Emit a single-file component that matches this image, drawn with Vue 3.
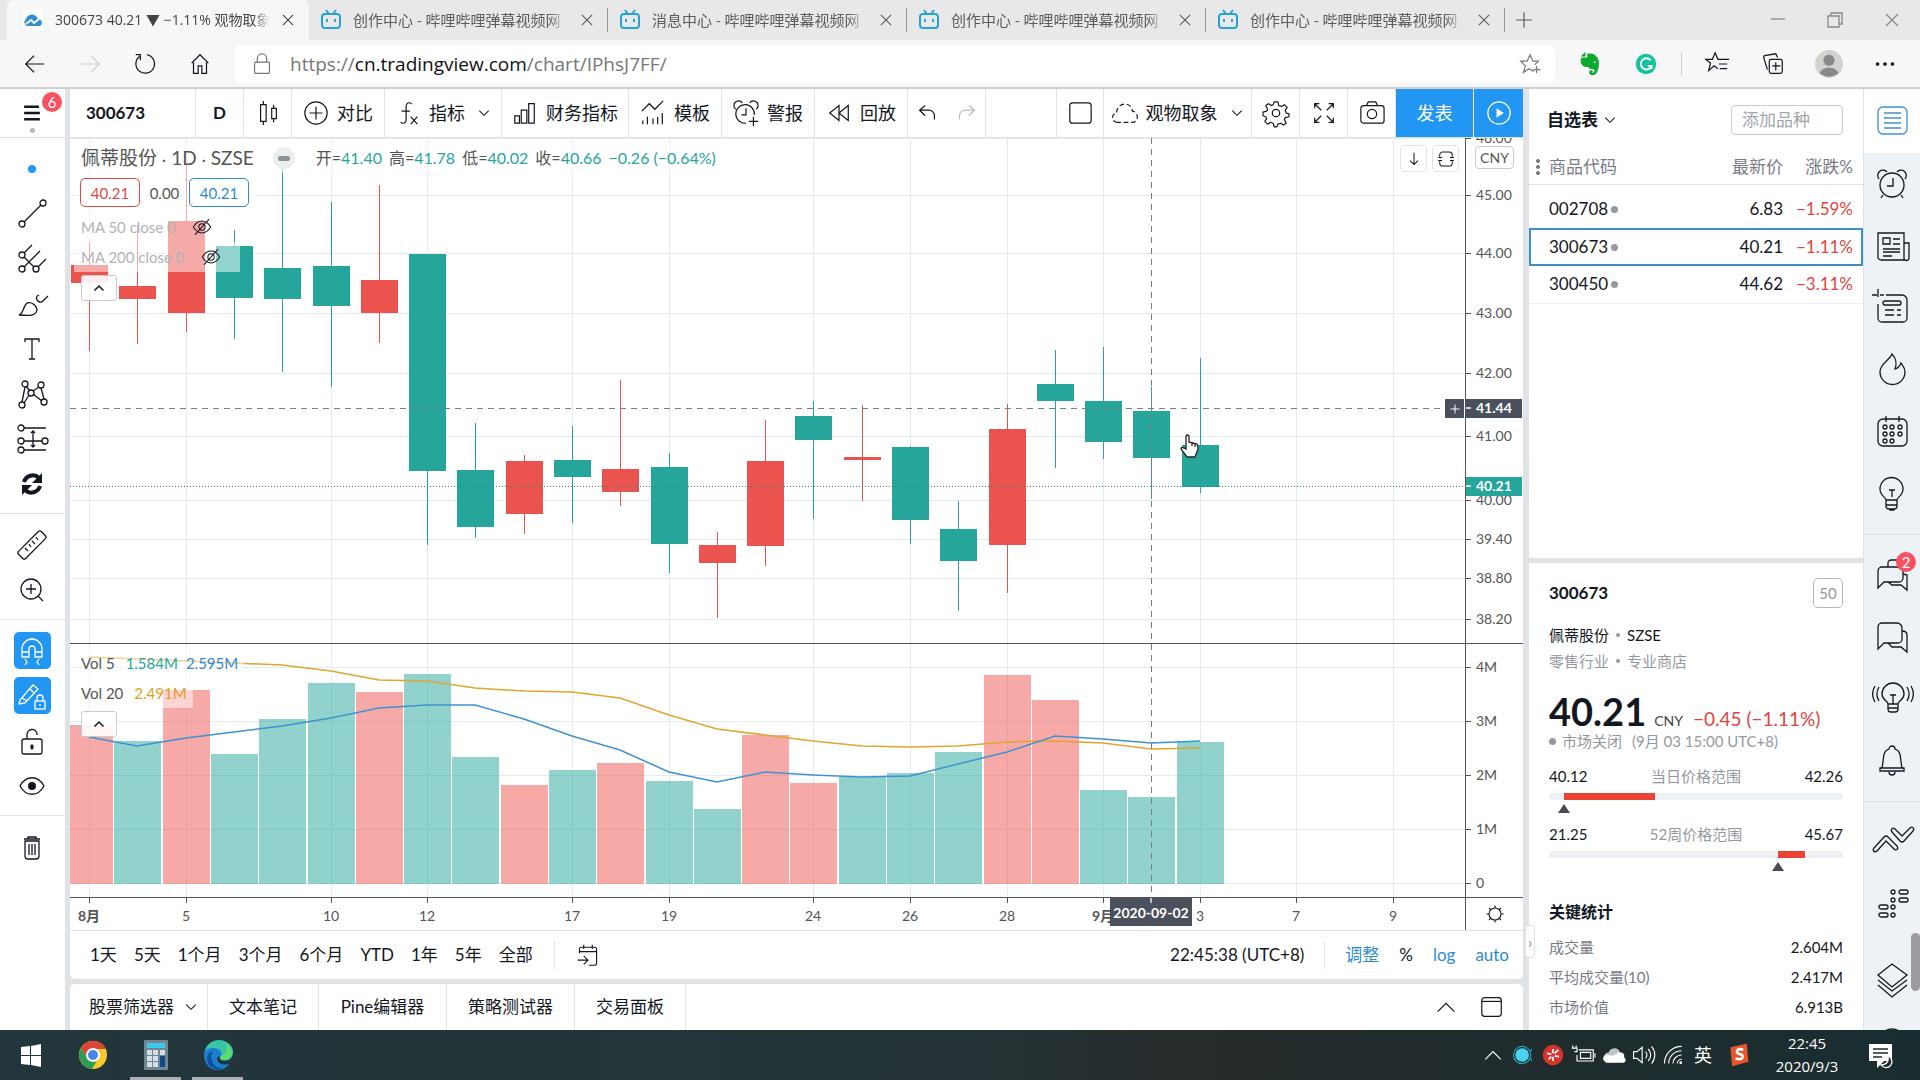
<script setup>
const icons = {
  back: '<path d="M24 14H5M13 5l-9 9 9 9"/>',
  forward: '<path d="M4 14h19M15 5l9 9-9 9"/>',
  reload: '<path d="M8 6a10 10 0 1 0 8-2M4 4h5v6"/>',
  home: '<path d="M5 13l9-9 9 9M7 12v12h5v-8h4v8h5V12"/>',
  lock: '<rect x="6" y="12" width="16" height="12" rx="1"/><path d="M9 12V8a5 5 0 0 1 10 0v4"/>',
  starPlus: '<path d="M18 22l-5-3-6 4 2-7-5-5h7l3-7 3 7h6l-4 4M21 16v8M17 20h8"/>',
  favs: '<path d="M15 19l-4-3-6 5 2-8-5-4h7l3-7 3 7h12M16 14h9M17 19h8"/>',
  collect: '<rect x="10" y="9" width="14" height="15" rx="2"/><path d="M17 12v9M13 16h9M8 20l-4-13a2 2 0 0 1 1-2l12-2 2 4"/>',
  more: '<g fill="currentColor" stroke="none"><circle cx="6" cy="14" r="2"/><circle cx="14" cy="14" r="2"/><circle cx="22" cy="14" r="2"/></g>',
  close: '<path d="M8 8l12 12M20 8L8 20"/>',
  plus: '<path d="M14 5v18M5 14h18"/>',
  min: '<path d="M7 13h14"/>',
  restore: '<path d="M7 10h11v11H7zM10 10V7h11v11h-3"/>',
  menu: '<path stroke-width="3" d="M4 6h19M4 14h20M4 22h20"/>',
  line: '<circle cx="4" cy="24" r="3"/><circle cx="25" cy="3" r="3"/><path d="M6 22L23 5"/>',
  fork: '<circle cx="4" cy="10" r="3"/><circle cx="4" cy="24" r="3"/><circle cx="18" cy="24" r="3"/><path d="M6 8l8-8M6 12l10 10M6 22L22 6M20 22l8-8"/>',
  brush: '<path d="M1 25c5-2 4-9 8-12a8 8 0 0 1 10 7c-1 6-8 6-18 5zM19 6c-2 4 3 8 6 5l5-5M19 6l2-1"/>',
  text: '<path d="M7 7V4h14v3M14 4v20M11 24h6"/>',
  pattern: '<circle cx="7" cy="4" r="3"/><circle cx="23" cy="5" r="3"/><circle cx="13" cy="13" r="3"/><circle cx="4" cy="25" r="3"/><circle cx="26" cy="22" r="3"/><path d="M7 7L4 22M23 8l3 11M8 6l4 5M21 7l-6 4M11 15l-5 8M15 14l9 7"/>',
  predict: '<circle cx="3" cy="3" r="3"/><circle cx="3" cy="16" r="3"/><circle cx="3" cy="25" r="3"/><circle cx="27" cy="16" r="3"/><path d="M6 3h22M6 16h18M6 25h22M15 7v14M13 8l2-2 2 2M13 20l2 2 2-2"/>',
  sync: '<path stroke-width="4" d="M6 12a9 9 0 0 1 15-4M22 16a9 9 0 0 1-15 4"/><path fill="currentColor" stroke="none" d="M24 3v10H14zM4 25V15h10z"/>',
  ruler: '<rect x="-2" y="9" width="32" height="10" rx="2" transform="rotate(-45 14 14)"/><path d="M7 17l3 3M11 13l2 3M14 10l3 3M18 6l2 3"/>',
  zoom: '<circle cx="13" cy="13" r="10"/><path d="M13 8v10M8 13h10M20 20l5 5"/>',
  magnet: '<path d="M4 20V12a10 10 0 0 1 20 0v8h-7v-8a3 3 0 0 0-6 0v8zM4 15h7M17 15h7M7 22l2 3-2 3M21 22l-2 3 2 3"/>',
  pencilLock: '<path d="M2 18L15 3l5 4L7 21l-6 1zM4 16l5 3M12 7l4 4"/><rect x="17" y="19" width="10" height="8"/><path d="M19 19v-3a3 3 0 0 1 6 0v3M22 22v2"/>',
  unlock: '<rect x="4" y="12" width="20" height="15" rx="2"/><path d="M9 12V8a5 5 0 0 1 10-1v1"/><ellipse cx="14" cy="20" rx="1" ry="2" fill="currentColor"/>',
  eye: '<path d="M2 14c6-11 18-11 24 0-6 11-18 11-24 0z"/><circle cx="14" cy="14" r="4" fill="currentColor" stroke="none"/>',
  eyeOff: '<path d="M3 14c6-10 16-10 22 0-6 10-16 10-22 0z"/><circle cx="14" cy="14" r="4"/><path d="M23 4L5 24"/>',
  trash: '<path d="M6 6h16M10 6V4h8v2M7 8h14v15a3 3 0 0 1-3 3h-8a3 3 0 0 1-3-3zM11 11v11M14 11v11M17 11v11"/>',
  candles: '<path d="M6 5h6v18H6zM9 1v4M9 23v4M18 9h5v11h-5zM20 5v4M20 20v4"/>',
  compare: '<circle cx="14" cy="14" r="12"/><path d="M14 7v14M7 14h14"/>',
  fx: '<path d="M18 4c-3-2-6-1-6 3v14c0 4-3 5-6 3M7 12h9M17 18l7 8M24 18l-7 8"/>',
  finance: '<path d="M3 17h5v8H3zM10 11h6v14h-6zM18 4h6v21h-6z"/>',
  template: '<path d="M2 12l8-8 6 6 9-9M3 22v4M8 18v8M14 20v6M19 18v8M24 14v12"/>',
  alarmPlus: '<path d="M14 25a10 10 0 1 1 9-9M14 9v7H9M3 10a5 5 0 1 1 7-7M18 3a5 5 0 1 1 7 7M22 18v10M17 23h10"/>',
  replay: '<path d="M14 6v16L4 14zM24 6v16l-10-8z"/>',
  undo: '<path d="M12 6L6 11l6 6M6 11h10a6 6 0 0 1 6 6v4"/>',
  redo: '<path d="M17 6l6 5-6 6M23 11H13a6 6 0 0 0-6 6v4"/>',
  square: '<rect x="3" y="3" width="23" height="22" rx="3"/>',
  cloud: '<path stroke-dasharray="5 3" d="M6 24a5 5 0 0 1-1-10C5 2 21 1 22 12c7 1 7 12 0 12z"/>',
  gear: '<circle cx="14" cy="14" r="4"/><path stroke-linejoin="round" d="M12 2h4l1 4 3 1 3-2 3 3-2 3 1 3 3 1v3l-4 1-1 2 2 4-3 2-3-2-3 1-1 3h-3l-1-4-3-1-3 2-3-3 2-3-1-2-3-1v-4l4-1 1-2-2-4 3-2 3 2 2-1z"/>',
  full: '<path d="M11 11L4 4M4 9V4h5M17 11l7-7M19 4h5v5M11 17l-7 7M4 19v5h5M17 17l7 7M24 19v5h-5"/>',
  camera: '<rect x="2" y="6" width="25" height="19" rx="3"/><path d="M8 6l2-4h8l2 4"/><circle cx="14" cy="15" r="5"/>',
  play: '<circle cx="14" cy="14" r="12"/><path fill="currentColor" d="M12 10l6 4-6 4z"/>',
  chev: '<path d="M8 11l6 6 6-6"/>',
  chevUp: '<path d="M5 19l9-9 9 9"/>',
  list: '<rect x="0" y="0" width="29" height="27" rx="5"/><path d="M6 6h17M6 11h17M6 16h17M6 21h17"/>',
  alarm: '<circle cx="14" cy="15" r="12"/><path d="M15 8v8H9M1 9a5 5 0 1 1 8-7M19 2a5 5 0 1 1 8 7M5 25l-2 3M23 25l2 3"/>',
  news: '<path d="M0 1h26v27H3a3 3 0 0 1-3-3zM26 11h5v15a2 2 0 0 1-5 0M5 6h7v6H5zM15 7h7M15 12h7M5 17h17M5 20h17M5 24h9"/>',
  data: '<path d="M8 1h16a5 5 0 0 1 5 5v18a4 4 0 0 1-4 4H4a4 4 0 0 1-4-4V10M0-5v8M-6 1h5M2 1h4M7 16h9M7 21h9M19 16h4M19 21h4"/><rect x="5" y="7" width="18" height="4" rx="2"/>',
  fire: '<path d="M14-2c-2 6-12 9-12 18a12 12 0 0 0 25 0c0-4-2-6-4-9-1 3-3 5-6 6 2-5 1-11-3-15z"/>',
  calendar: '<rect x="0" y="1" width="29" height="27" rx="5"/><path d="M8-2v6M21-2v6"/><circle cx="7" cy="9" r="2"/><circle cx="14" cy="9" r="2"/><circle cx="22" cy="9" r="2"/><circle cx="7" cy="16" r="2"/><circle cx="14" cy="16" r="2"/><circle cx="22" cy="16" r="2"/><circle cx="7" cy="23" r="2"/><circle cx="14" cy="23" r="2"/>',
  bulb: '<path d="M8 20c0-3-6-4-6-11a11 11 0 0 1 23 0c0 7-6 8-6 11v6a3 3 0 0 1-3 3h-5a3 3 0 0 1-3-3zM8 20h11M8 25h11M11 10h6M14 10v7M12 29v1h4v-1"/>',
  chats: '<path d="M4 6h17a4 4 0 0 1 4 4v7a4 4 0 0 1-4 4H6l-6 6V10a4 4 0 0 1 4-4zM10 6V2a3 3 0 0 1 3-3h7M25 13l4 1v15l-6-5H14l-4-3"/>',
  chat: '<path d="M4 0h15a5 5 0 0 1 5 5v11a4 4 0 0 1-4 4H6l-6 6V4a4 4 0 0 1 4-4zM24 8c4 0 5 2 5 4v17l-6-5H14l-4-4"/>',
  stream: '<path d="M10 19c0-3-6-4-6-10a11 11 0 0 1 22 0c0 6-6 7-6 10v5a3 3 0 0 1-3 3h-4a3 3 0 0 1-3-3zM10 19h10M10 23h10M12 10h6M15 10v9M1 2c-3 5-3 9 0 14M-3 1c-3 5-3 11 0 16M29 2c3 5 3 9 0 14M33 1c3 5 3 11 0 16"/>',
  bell: '<path d="M4 21c2-8 0-17 7-19a3 3 0 0 1 6 0c7 2 5 11 7 19M2 21h24v3H2zM11 25a3 3 0 0 0 6 0"/>',
  zig: '<path stroke-linejoin="round" d="M-4 20L6 9q2-2 4 0l9 9c2 3-1 5-3 3l-8-8-9 10c-3 2-5-1-3-3zM14 4c-2-3 1-5 3-3l7 7 8-8c2-2 5 0 3 3l-9 10q-2 2-4 0z"/>',
  dots: '<g><circle cx="15" cy="2" r="2"/><circle cx="15" cy="10" r="2"/><circle cx="15" cy="17" r="2"/><circle cx="15" cy="25" r="2"/><rect x="21" y="0" width="9" height="4" rx="2"/><rect x="21" y="8" width="9" height="4" rx="2"/><rect x="1" y="15" width="9" height="4" rx="2"/><rect x="1" y="23" width="9" height="4" rx="2"/></g>',
  layers: '<path d="M14-2l15 11-15 12L0 9zM0 14l14 11 15-11M0 19l14 12 15-12"/>',
  help: '<circle cx="14" cy="14" r="13"/><path d="M10 11a4 4 0 1 1 5 4l-1 3M14 21v1"/>',
  goto: '<path d="M4 12V7a2 2 0 0 1 2-2h16a2 2 0 0 1 2 2v17a2 2 0 0 1-2 2h-7M4 10h20M9 2v5M19 2v5M2 20h11M9 15l5 5-5 5"/>',
  window: '<rect x="3" y="4" width="21" height="20" rx="3"/><path d="M3 8h21"/>',
  sun: '<circle cx="14" cy="14" r="7"/><path d="M14 4v3M14 21v3M4 14h3M21 14h3M7 7l2 2M19 19l2 2M21 7l-2 2M9 19l-2 2"/>',
  down: '<path d="M14 6v15M9 16l5 5 5-5"/>',
  expand: '<path d="M6 11V9a4 4 0 0 1 4-4h8a4 4 0 0 1 4 4v2M6 17v2a4 4 0 0 0 4 4h8a4 4 0 0 0 4-4v-2M4 12h5M19 12h5M4 16h5M19 16h5"/>',
  battery: '<path d="M9 8h17v13H7v-7M11 11h12v7H11zM1 6h6v4H4M2 3v3M6 3v3M28 12v5"/>',
  onedrive: '<path fill="#bcc5c5" stroke="none" d="M9 11a7 7 0 0 1 13-1l-6 8-10 4a6 6 0 0 1 3-11z"/><path fill="#fff" stroke="none" d="M5 22c-4-2-3-8 2-8l7 1 6-4c6-1 8 3 7 6 3 2 2 6-1 6H6z"/>',
  speaker: '<path d="M3 10h4l6-5v18l-6-5H3zM17 10c2 2 2 6 0 8M20 7c4 4 4 10 0 14M24 4c5 6 5 14 0 20"/>',
  wifi: '<path d="M4 24A20 20 0 0 1 24 4M9 24A15 15 0 0 1 24 9M14 24a10 10 0 0 1 10-10M19 24a5 5 0 0 1 5-5"/><circle cx="23" cy="23" r="1"/>',
  note: '<path fill="#fff" stroke="none" d="M3 3h23v17H18l-7 7v-7H3z"/><path stroke="#1f2d30" d="M7 8h15M7 12h15M7 16h9"/><path fill="#1f2d30" d="M22 15a6 6 0 1 1-7 9c5 0 8-3 7-9z"/>',
}

const tabs = ['创作中心', '消息中心', '创作中心', '创作中心'].map(t => t + ' - 哔哩哔哩弹幕视频网')

const tools = [
  ['line', 'fork', 'brush', 'text', 'pattern', 'predict', 'sync'],
  ['ruler', 'zoom'],
  ['magnet', 'pencilLock', 'unlock', 'eye'],
  ['trash'],
]
const panels = [
  ['list', 'alarm', 'news', 'data', 'fire', 'calendar', 'bulb'],
  ['chats', 'chat', 'stream', 'bell'],
  ['zig', 'dots'],
  ['layers', 'help'],
]
const header = [
  { icon: 'candles', w: 'w48' },
  { icon: 'compare', label: '对比', w: 'w93' },
  { icon: 'fx', label: '指标', more: true, w: 'w117' },
  { icon: 'finance', label: '财务指标', w: 'w127' },
  { icon: 'template', label: '模板', w: 'w93' },
  { icon: 'alarmPlus', label: '警报', w: 'w93' },
  { icon: 'replay', label: '回放', w: 'w93' },
]

// y positions share one vertical scale that starts at the top of the window's chart area
const TOP = 138
const cx = i => Math.round(19.2 + i * 48.28)
// high, body top, body bottom, low, rising candle, volume top, rising volume
const bars = [
  [242, 265, 283, 351, 1, 725, 1], [225, 286, 299, 344, 1, 741, 0], [163, 221, 313, 332, 1, 690, 1],
  [230, 246, 298, 339, 0, 754, 0], [163, 268, 299, 372, 0, 719, 0], [202, 266, 306, 387, 0, 683, 0],
  [185, 280, 313, 343, 1, 692, 1], [254, 254, 471, 545, 0, 674, 0], [423, 470, 527, 538, 0, 757, 0],
  [455, 461, 514, 534, 1, 785, 1], [426, 460, 477, 523, 0, 770, 0], [380, 469, 492, 506, 1, 763, 1],
  [453, 467, 544, 573, 0, 781, 0], [532, 545, 563, 618, 1, 809, 0], [420, 461, 546, 566, 1, 735, 1],
  [401, 416, 440, 519, 0, 783, 1], [405, 457, 460, 501, 1, 777, 0], [446, 447, 520, 544, 0, 773, 0],
  [501, 529, 561, 611, 0, 752, 0], [404, 429, 545, 593, 1, 675, 1], [350, 384, 401, 468, 0, 700, 1],
  [347, 401, 442, 459, 0, 790, 0], [387, 411, 458, 499, 0, 797, 0], [358, 445, 487, 493, 0, 742, 0],
]
const slow = [657, 659, 661, 663, 665, 671, 680, 681, 688, 691, 692, 698, 715, 729, 735, 741, 746, 747, 746, 742, 741, 743, 749, 748]
const fast = [737, 746, 738, 732, 726, 718, 708, 705, 705, 719, 736, 750, 772, 782, 772, 775, 777, 776, 764, 752, 736, 739, 743, 741]
const poly = a => a.map((y, i) => cx(i) + ',' + y).join(' ')
const prices = [[138, '46.00'], [195, '45.00'], [253, '44.00'], [313, '43.00'], [373, '42.00'], [436, '41.00'], [500, '40.00'], [539, '39.40'], [578, '38.80'], [619, '38.20'],
  [667, '4M'], [721, '3M'], [775, '2M'], [829, '1M'], [883, '0']]
const days = [[0, '8月'], [2, '5'], [5, '10'], [7, '12'], [10, '17'], [12, '19'], [15, '24'], [17, '26'], [19, '28'], [21, '9月'], [23, '3'], [25, '7'], [27, '9']]
const watch = [['002708', '6.83', '−1.59%'], ['300673', '40.21', '−1.11%'], ['300450', '44.62', '−3.11%']]
const ranges = ['1天', '5天', '1个月', '3个月', '6个月', 'YTD', '1年', '5年', '全部']
const docks = [['股票筛选器', 'd138'], ['文本笔记', 'd111'], ['Pine编辑器', 'd127'], ['策略测试器', 'd127'], ['交易面板', 'd111']]
const stats = [['成交量', '2.604M'], ['平均成交量(10)', '2.417M'], ['市场价值', '6.913B']]
const spans = [
  { lo: '40.12', name: '当日价格范围', hi: '42.26', from: 5, size: 31 },
  { lo: '21.25', name: '52周价格范围', hi: '45.67', from: 78, size: 9 },
]
</script>

<template>
  <div class="desktop">
    <header class="browser">
      <div class="tabs">
        <div class="tab active">
          <svg class="fav" viewBox="0 0 20 20"><rect width="20" height="20" fill="#fff" stroke="none"/><path fill="#2f8fd6" stroke="none" d="M4 16a4 4 0 0 1-1-7c2-6 10-6 12 0 5 0 5 7 1 7z"/><path d="M3 14l5-4 3 3 5-4" stroke="#fff"/></svg>
          <span class="title">300673 40.21 ▼ −1.11% 观物取象</span>
          <button class="x" aria-label="关闭"><svg viewBox="0 0 28 28" v-html="icons.close"/></button>
        </div>
        <div v-for="(t, i) in tabs" :key="i" class="tab">
          <svg class="fav" viewBox="0 0 20 20"><rect x="1" y="4" width="18" height="14" rx="3"/><path d="M5 0l3 4M15 0l-3 4M6 9v3M14 9v3"/></svg>
          <span class="title">{{ t }}</span>
          <button class="x" aria-label="关闭"><svg viewBox="0 0 28 28" v-html="icons.close"/></button>
        </div>
        <button class="newtab" aria-label="新标签页"><svg viewBox="0 0 28 28" v-html="icons.plus"/></button>
        <div class="winctl">
          <button v-for="n in ['min', 'restore', 'close']" :key="n" :aria-label="n"><svg viewBox="0 0 28 28" v-html="icons[n]"/></button>
        </div>
      </div>
      <div class="nav">
        <div class="navbtns">
          <button v-for="n in ['back', 'forward', 'reload', 'home']" :key="n" :class="n" :aria-label="n"><svg viewBox="0 0 28 28" v-html="icons[n]"/></button>
        </div>
        <div class="address">
          <svg viewBox="0 0 28 28" v-html="icons.lock"/>
          <span class="url" role="textbox">https://<b>cn.tradingview.com</b>/chart/IPhsJ7FF/</span>
          <svg viewBox="0 0 28 28" v-html="icons.starPlus"/>
        </div>
        <div class="exts">
          <button aria-label="印象笔记"><svg viewBox="0 0 28 28"><path fill="#0ca82f" stroke="none" d="M11 3c4-1 8 0 10 3 4 4 3 13 0 18-2 3-8 3-8-1 0-3 4-3 4-1l-1 1c1 1 3 0 3-2-1-3-6 0-7-4-4 1-8-1-8-7 0-2 1-3 2-3h5z"/><path fill="#0ca82f" stroke="none" d="M4 6l5-5v5z"/><circle cx="19" cy="12" r="1" fill="#fff" stroke="none"/></svg></button>
          <button aria-label="Grammarly"><svg viewBox="0 0 28 28"><circle cx="14" cy="14" r="11" fill="#15c39a" stroke="none"/><path d="M19 10a6 6 0 1 0 1 6h-4M20 15v4" stroke="#fff" stroke-width="2"/></svg></button>
          <i></i>
          <button aria-label="收藏夹"><svg viewBox="0 0 28 28" v-html="icons.favs"/></button>
          <button aria-label="集锦"><svg viewBox="0 0 28 28" v-html="icons.collect"/></button>
          <button aria-label="用户"><svg viewBox="0 0 28 28"><g stroke="none"><circle cx="14" cy="14" r="15" fill="#d4d2cf"/><circle cx="14" cy="10" r="6" fill="#8a8886"/><path fill="#8a8886" d="M4 24c2-8 18-8 20 0-6 5-14 5-20 0z"/></g></svg></button>
          <button aria-label="更多"><svg viewBox="0 0 28 28" v-html="icons.more"/></button>
        </div>
      </div>
    </header>

    <main class="app">
      <nav class="tools">
        <button class="menu" aria-label="菜单"><svg viewBox="0 0 28 28" v-html="icons.menu"/><em class="badge">6</em><i></i></button>
        <div v-for="(g, gi) in tools" :key="gi" class="group">
          <button v-if="gi === 0" aria-label="光标"><span class="dot"></span></button>
          <button v-for="n in g" :key="n" :class="{ on: n === 'magnet' || n === 'pencilLock' }" :aria-label="n"><span><svg viewBox="0 0 28 28" v-html="icons[n]"/></span></button>
        </div>
      </nav>

      <section class="center">
        <div class="card">
          <div class="bar">
            <button class="symbol">300673</button>
            <button class="w48 strong">D</button>
            <button v-for="b in header" :key="b.icon" :class="b.w">
              <svg viewBox="0 0 28 28" v-html="icons[b.icon]"/><span v-if="b.label">{{ b.label }}</span><svg v-if="b.more" class="small" viewBox="0 0 28 28" v-html="icons.chev"/>
            </button>
            <div class="history">
              <button aria-label="撤销"><svg viewBox="0 0 28 28" v-html="icons.undo"/></button>
              <button class="off" aria-label="重做"><svg viewBox="0 0 28 28" v-html="icons.redo"/></button>
            </div>
            <span class="fill"></span>
            <button class="w48" aria-label="布局"><svg viewBox="0 0 28 28" v-html="icons.square"/></button>
            <button class="w147"><svg viewBox="0 0 28 28" v-html="icons.cloud"/><span>观物取象</span><svg class="small" viewBox="0 0 28 28" v-html="icons.chev"/></button>
            <button v-for="n in ['gear', 'full', 'camera']" :key="n" class="w48" :aria-label="n"><svg viewBox="0 0 28 28" v-html="icons[n]"/></button>
            <button class="publish">发表</button>
            <button class="publish play" aria-label="播放"><svg viewBox="0 0 28 28" v-html="icons.play"/></button>
          </div>

          <div class="chart">
            <div class="plotrow">
              <div class="plot">
                <svg class="canvas" width="100%" height="759">
                  <g :transform="`translate(0 ${-TOP})`" shape-rendering="crispEdges">
                    <g class="grid">
                      <line v-for="p in prices" :key="p[1]" x1="0" x2="100%" :y1="p[0]" :y2="p[0]"/>
                      <line v-for="d in days" :key="d[0]" :x1="cx(d[0])" :x2="cx(d[0])" y1="138" y2="897"/>
                    </g>
                    <rect v-for="(b, i) in bars" :key="i" :x="cx(i) - 23" :y="b[5]" width="47" :height="884 - b[5]" :class="b[6] ? 'vup' : 'vdown'"/>
                    <g v-for="(b, i) in bars" :key="'c' + i" :class="b[4] ? 'up' : 'down'">
                      <rect :x="cx(i)" :y="b[0]" width="1" :height="b[3] - b[0]"/>
                      <rect :x="cx(i) - 18" :y="b[1]" width="37" :height="b[2] - b[1]"/>
                    </g>
                    <g shape-rendering="auto" fill="none" stroke-width="1.5">
                      <polyline :points="poly(slow)" stroke="#e0a52f"/>
                      <polyline :points="poly(fast)" stroke="#3f92d2"/>
                    </g>
                    <line class="last" x1="0" x2="100%" y1="486" y2="486"/>
                    <line class="cross" x1="0" x2="100%" y1="408" y2="408"/>
                    <line class="cross" :x1="cx(22)" :x2="cx(22)" y1="138" y2="897"/>
                    <line class="edge" x1="0" x2="100%" y1="643" y2="643"/>
                  </g>
                  <path transform="translate(1110 296)" fill="#fff" stroke="#222" d="M6 12V2q1-2 3 0v6l8 2q1 1 1 5l-3 8H7L1 15q0-3 5 0zM12 9v3M15 10v3"/>
                </svg>

                <div class="legend">
                  <div class="row head">
                    <span class="name">佩蒂股份<small>·</small>1D<small>·</small>SZSE</span>
                    <button class="pill" aria-label="收起"><i></i></button>
                    <span class="ohlc"><span>开=<b>41.40</b></span><span>高=<b>41.78</b></span><span>低=<b>40.02</b></span><span>收=<b>40.66</b></span><b>−0.26 (−0.64%)</b></span>
                  </div>
                  <div class="row quote"><button class="sell">40.21</button><span>0.00</span><button class="buy">40.21</button></div>
                  <div class="row ma">MA 50 close 0<svg viewBox="0 0 28 28" v-html="icons.eyeOff"/></div>
                  <div class="row ma">MA 200 close 0<svg viewBox="0 0 28 28" v-html="icons.eyeOff"/></div>
                  <button class="fold" aria-label="折叠"><svg viewBox="0 0 28 28" v-html="icons.chevUp"/></button>
                </div>
                <div class="legend vol">
                  <div class="row">Vol 5<b class="g">1.584M</b><b class="b">2.595M</b></div>
                  <div class="row">Vol 20<b class="y">2.491M</b></div>
                  <button class="fold" aria-label="折叠"><svg viewBox="0 0 28 28" v-html="icons.chevUp"/></button>
                </div>
                <div class="corner">
                  <button aria-label="滚动"><svg viewBox="0 0 28 28" v-html="icons.down"/></button>
                  <button aria-label="最大化"><svg viewBox="0 0 28 28" v-html="icons.expand"/></button>
                </div>
                <button class="addline" aria-label="添加"><svg viewBox="0 0 28 28" v-html="icons.plus"/></button>
              </div>
              <div class="scale">
                <svg width="57" height="759">
                  <g :transform="`translate(0 ${-TOP})`">
                    <g class="edge" shape-rendering="crispEdges">
                      <line x1="0" x2="57" y1="643" y2="643"/>
                      <line v-for="p in prices" :key="p[1]" x1="0" x2="5" :y1="p[0]" :y2="p[0]"/>
                    </g>
                    <text v-for="p in prices" :key="p[1]" x="10" :y="p[0] + 5">{{ p[1] }}</text>
                    <rect y="399" width="56" height="19" fill="#4a505c"/>
                    <rect y="477" width="56" height="19" fill="#26a69a"/>
                    <path d="M0 408h5M0 486h5" stroke="#fff"/>
                    <text class="tag" x="10" y="413">41.44</text>
                    <text class="tag" x="10" y="491">40.21</text>
                  </g>
                </svg>
                <span class="cny">CNY</span>
              </div>
            </div>
            <div class="timerow">
              <svg class="times" width="100%" height="32">
                <g class="edge" shape-rendering="crispEdges"><line v-for="d in days" :key="d[0]" :x1="cx(d[0])" :x2="cx(d[0])" y1="0" y2="5"/></g>
                <text v-for="d in days" :key="d[0]" :x="cx(d[0])" y="23" text-anchor="middle" :class="{ month: d[1].endsWith('月') }">{{ d[1] }}</text>
                <g :transform="`translate(${cx(22)} 0)`"><rect x="-41" width="82" height="28" fill="#4a505c"/><path d="M0 0v5" stroke="#fff"/><text class="tag" y="20" text-anchor="middle">2020-09-02</text></g>
              </svg>
              <button class="axisset" aria-label="设置"><svg viewBox="0 0 28 28" v-html="icons.sun"/></button>
            </div>
          </div>

          <div class="ranges">
            <button v-for="r in ranges" :key="r">{{ r }}</button>
            <i></i>
            <button aria-label="前往"><svg viewBox="0 0 28 28" v-html="icons.goto"/></button>
            <div class="modes">
              <button>22:45:38 (UTC+8)</button>
              <i></i>
              <button class="hot">调整</button><button>%</button><button class="hot">log</button><button class="hot">auto</button>
            </div>
          </div>
        </div>

        <div class="dock">
          <button v-for="d in docks" :key="d[0]" :class="d[1]">{{ d[0] }}<svg v-if="d[1] === 'd138'" viewBox="0 0 28 28" v-html="icons.chev"/></button>
          <span class="fill"></span>
          <button class="ctl" aria-label="展开"><svg viewBox="0 0 28 28" v-html="icons.chevUp"/></button>
          <button class="ctl" aria-label="窗口"><svg viewBox="0 0 28 28" v-html="icons.window"/></button>
        </div>
      </section>

      <aside class="side">
        <button class="handle" aria-label="收起面板">›</button>
        <section class="watch">
          <div class="whead">
            <button>自选表<svg viewBox="0 0 28 28" v-html="icons.chev"/></button>
            <input type="text" placeholder="添加品种" aria-label="添加品种">
          </div>
          <table>
            <thead><tr><th><span class="grip"></span>商品代码</th><th>最新价</th><th>涨跌%</th></tr></thead>
            <tbody>
              <tr v-for="w in watch" :key="w[0]" :class="{ sel: w[0] === '300673' }"><td>{{ w[0] }}<i></i></td><td>{{ w[1] }}</td><td>{{ w[2] }}</td></tr>
            </tbody>
          </table>
        </section>
        <section class="detail">
          <div class="dhead"><h2>300673</h2><button>50</button></div>
          <p class="firm">佩蒂股份<i></i>SZSE</p>
          <p class="firm soft">零售行业<i></i>专业商店</p>
          <p class="price"><strong>40.21</strong><small>CNY</small><span>−0.45 (−1.11%)</span></p>
          <p class="state"><i></i>市场关闭<span>(9月 03 15:00 UTC+8)</span></p>
          <div v-for="s in spans" :key="s.lo" class="span">
            <div><b>{{ s.lo }}</b><span>{{ s.name }}</span><b>{{ s.hi }}</b></div>
            <div class="track"><i class="seg" :style="{ left: s.from + '%', width: s.size + '%' }"></i><i class="tri" :style="{ left: s.from + '%' }"></i></div>
          </div>
          <h3>关键统计</h3>
          <dl><div v-for="s in stats" :key="s[0]"><dt>{{ s[0] }}</dt><dd>{{ s[1] }}</dd></div></dl>
        </section>
      </aside>

      <nav class="rail">
        <div v-for="(g, gi) in panels" :key="gi" class="group">
          <button v-for="n in g" :key="n" :class="{ on: n === 'list' }" :aria-label="n"><svg viewBox="0 0 28 28" v-html="icons[n]"/><em v-if="n === 'chats'" class="badge">2</em></button>
        </div>
        <i class="thumb"></i>
      </nav>
    </main>

    <footer class="taskbar">
      <button aria-label="开始"><svg viewBox="0 0 28 28"><path fill="#fff" stroke="none" d="M4 6l9-1v9H4zM14 5l10-2v11H14zM4 15h9v9l-9-1zM14 15h10v11l-10-2z"/></svg></button>
      <button aria-label="Chrome"><svg viewBox="0 0 28 28"><g stroke="none"><circle cx="14" cy="14" r="14" fill="#f7c92b"/><path fill="#d9483b" d="M2 7a14 14 0 0 1 25 1H14l-6 9z"/><path fill="#2c9c54" d="M2 7a14 14 0 0 0 11 21l6-10-6 2-5-3z"/><circle cx="14" cy="14" r="7" fill="#fff"/><circle cx="14" cy="14" r="5" fill="#4787ea"/></g></svg></button>
      <button class="run" aria-label="计算器"><svg viewBox="0 0 28 28"><g stroke="none"><rect x="2" y="-1" width="24" height="30" rx="1" fill="#6f8693"/><rect x="5" y="2" width="18" height="5" fill="#3fc8ef"/><path fill="#d7dfe6" d="M5 9h5v5H5zM11 9h5v5h-5zM18 9h5v5h-5zM5 15h5v5H5zM11 15h5v5h-5zM5 21h5v5H5zM11 21h5v5h-5z"/><path fill="#114a86" d="M18 15h5v11h-5z"/></g></svg></button>
      <button class="run" aria-label="Edge"><svg viewBox="0 0 28 28"><g stroke="none"><path fill="#1b7fd0" d="M0 14C0 5 7 0 14 0c9 0 15 6 15 12 0 5-4 8-8 8-5 0-6-3-5-5-6 1-3 11 9 8-3 5-8 6-11 6C6 29 0 23 0 14z"/><path fill="#36c6a7" d="M1 10C3 3 8-1 15-1c8 0 14 6 14 12 0 5-4 8-8 8-5 0-6-2-4-4 2-4-2-8-8-8-4 0-7 2-8 3z"/><path fill="#5fdc6c" d="M22 2c9 7 7 17-1 17-5 0-6-2-4-4 6-2 8-7 5-13z"/><path fill="#0d4f9c" d="M7 14c0 8 5 14 12 13-4 3-12 1-15-5-2-6 0-10 5-12z"/></g></svg></button>
      <span class="fill"></span>
      <div class="tray">
        <svg viewBox="0 0 28 28" v-html="icons.chevUp"/>
        <svg viewBox="0 0 28 28"><circle cx="13" cy="14" r="8" fill="#49d3ee" stroke="none"/><circle cx="13" cy="14" r="10" stroke="#2ba9c6"/><path d="M24 7l-1 3M24 21l-1-3" stroke="#2ba9c6"/></svg>
        <svg viewBox="0 0 28 28"><circle cx="14" cy="14" r="12" fill="#d8342e" stroke="none"/><path d="M14 7v5M14 16v5M7 12l5 1M16 15l5 1M9 19l3-3M16 12l4-4" stroke="#fff" stroke-width="2"/></svg>
        <svg viewBox="0 0 28 28" v-html="icons.battery"/>
        <svg viewBox="0 0 28 28" v-html="icons.onedrive"/>
        <svg viewBox="0 0 28 28" v-html="icons.speaker"/>
        <svg viewBox="0 0 28 28" v-html="icons.wifi"/>
        <span>英</span>
        <svg class="sogou" viewBox="0 0 28 28"><path fill="#e8552c" stroke="none" d="M4 5l19-4 2 21-19 5z"/><path d="M19 8c-8-3-10 4-4 5s4 8-5 5" stroke="#fff" stroke-width="3"/></svg>
      </div>
      <div class="clock"><span>22:45</span><span>2020/9/3</span></div>
      <button class="notif" aria-label="通知"><svg viewBox="0 0 28 28" v-html="icons.note"/></button>
    </footer>
  </div>
</template>

<style>
body { margin: 0; background: #fff; }
</style>

<style scoped>
* { box-sizing: border-box; }
.desktop { display: flex; flex-direction: column; height: 100vh; overflow: hidden; font: 15px/20px Lato, "Noto Sans CJK SC", sans-serif; color: #131722; }
button { font: inherit; color: inherit; background: none; border: 0; padding: 0; margin: 0; display: flex; align-items: center; justify-content: center; white-space: nowrap; }
svg { display: block; flex: none; overflow: visible; fill: none; stroke: currentColor; stroke-width: 1.3; }
svg text { stroke: none; }
.fill { flex: 1; }
p, h2, h3, dl, dd { margin: 0; }
.badge { position: absolute; width: 20px; height: 20px; border-radius: 50%; background: #f7525f; color: #fff; font-style: normal; font-size: 15px; line-height: 20px; text-align: center; }

/* browser */
.browser { flex: none; font-family: "Open Sans", "Noto Sans CJK SC", sans-serif; background: #f7f7f7; border-bottom: 2px solid #cfcfcf; }
.tabs { display: flex; height: 40px; background: #e8e8e8; }
.tab { display: flex; align-items: center; width: 299px; padding: 0 11px 0 12px; color: #5c5c5c; position: relative; }
.tab::after { content: ""; position: absolute; right: 0; top: 8px; height: 24px; width: 1px; background: #999; }
.tab.active { width: 302px; margin-left: 7px; padding-left: 16px; background: #f7f7f7; border-radius: 6px 6px 0 0; color: #444; }
.tab.active::after { display: none; }
.fav { width: 20px; height: 20px; color: #25a4d4; stroke-width: 2; }
.title { flex: 1; margin-left: 12px; overflow: hidden; white-space: nowrap; font-size: 15px; mask-image: linear-gradient(90deg, #000 92%, transparent); }
.active .title { font-size: 14px; }
.x { width: 20px; height: 28px; margin-left: 11px; }
.active .x { margin-left: 8px; }
.x svg { width: 24px; height: 24px; }
.newtab { width: 38px; }
.newtab svg { width: 24px; height: 24px; color: #555; }
.winctl { margin-left: auto; display: flex; }
.winctl button { width: 57px; color: #888; }
.winctl svg { width: 28px; height: 28px; }
.nav { display: flex; align-items: center; height: 47px; padding-left: 7px; }
.navbtns { display: flex; width: 228px; }
.navbtns button { width: 55px; }
.navbtns svg, .address svg, .exts svg { width: 26px; height: 26px; }
.forward { color: #ccc; }
.address { flex: 1; display: flex; align-items: center; height: 38px; padding: 0 12px 0 14px; background: #fff; border-radius: 5px; color: #777; }
.url { flex: 1; margin-left: 15px; font-size: 19px; line-height: 24px; }
.url b { font-weight: 400; color: #111; }
.exts { display: flex; align-items: center; padding: 0 7px; }
.exts button { width: 56px; }
.exts i { width: 1px; height: 24px; background: #ccc; margin: 0 7px; }

/* workspace */
.app { flex: 1; min-height: 0; display: flex; background: #dfe2e6; }
.tools { width: 65px; flex: none; background: #fff; margin-right: 5px; }
.tools .menu { position: relative; width: 100%; height: 49px; border-bottom: 1px solid #dfe2e6; }
.menu svg { width: 26px; height: 22px; }
.menu .badge { left: 42px; top: 3px; }
.menu i { position: absolute; left: 30px; top: 39px; width: 5px; height: 5px; border-radius: 50%; background: #b2b5be; }
.tools .group { padding: 8px 0 7px; border-bottom: 1px solid #dfe2e6; }
.tools .group:last-child { border: 0; }
.tools button { padding-right: 1px; }
.tools .group button { width: 100%; height: 45px; }
.tools .group span { display: flex; align-items: center; justify-content: center; width: 37px; height: 37px; border-radius: 5px; }
.tools .group svg { width: 28px; height: 28px; }
.tools .group .dot { width: 8px; height: 8px; border-radius: 50%; background: #2196f3; }
.on span { background: #2196f3; color: #fff; }

.center { flex: 1; min-width: 0; display: flex; flex-direction: column; gap: 5px; }
.card { background: #fff; border-radius: 0 0 5px 5px; overflow: hidden; }
.bar { display: flex; height: 49px; border-bottom: 1px solid #dfe2e6; font-size: 18px; }
.bar > button, .history { border-right: 1px solid #dfe2e6; gap: 8px; }
.bar svg { width: 26px; height: 26px; }
.bar .small { width: 22px; height: 22px; margin: 0 -4px 0 0; }
.symbol { width: 126px; padding-right: 34px; font-weight: 700; font-size: 17px; }
.strong { font-weight: 700; font-size: 17px; }
.w48 { width: 48px; }
.w93 { width: 93px; }
.w117 { width: 117px; }
.w127 { width: 127px; }
.w147 { width: 148px; }
.history { display: flex; width: 78px; padding: 0 4px; }
.history button { flex: 1; }
.history .off { color: #bbb; }
.fill + .w48 { border-left: 1px solid #dfe2e6; }
.bar .publish { width: 78px; background: #2196f3; color: #fff; border-color: #fff; }
.bar .play { width: 49px; border: 0; }

.plotrow, .timerow { display: flex; }
.plot { flex: 1; min-width: 0; position: relative; overflow: hidden; }
.canvas rect { stroke: none; }
.grid line { stroke: #e1ecef; stroke-width: 1; }
.up { fill: #eb544e; }
.down { fill: #26a69a; }
.vup { fill: #ef5350; opacity: .5; }
.vdown { fill: #26a69a; opacity: .5; }
.edge { stroke: #50535e; stroke-width: 1; }
.last { stroke: #26807a; stroke-width: 1; stroke-dasharray: 1 2; }
.cross { stroke: #758085; stroke-width: 1; stroke-dasharray: 6 5; }
.scale { position: relative; border-left: 1px solid #50535e; width: 58px; overflow: hidden; }
.scale text, .times text { font-size: 14px; fill: #555; }
.scale text.tag { font-weight: 700; fill: #fff; }
.scale rect, .times rect { stroke: none; }
.times text.tag { fill: #fff; font-weight: 700; }
.times .month { font-weight: 700; }
.cny { position: absolute; left: 9px; top: 8px; width: 39px; height: 23px; border: 1px solid #c5c9d0; border-radius: 4px; background: #fff; color: #555; font-size: 14px; line-height: 21px; text-align: center; }
.timerow { border-top: 1px solid #50535e; border-bottom: 1px solid #dfe2e6; }
.times { flex: 1; min-width: 0; width: auto; }
.axisset { width: 58px; border-left: 1px solid #50535e; }
.axisset svg { width: 24px; height: 24px; }

.legend { position: absolute; left: 4px; top: 5px; display: flex; flex-direction: column; align-items: flex-start; color: #555; }
.row { display: flex; align-items: center; height: 30px; padding: 0 6px 0 7px; background: rgba(255, 255, 255, .5); }
.head { font-size: 16px; }
.name { font-size: 19px; line-height: 24px; }
.name small { margin: 0 5px; }
.pill { width: 22px; height: 22px; margin: 0 21px 0 19px; border-radius: 50%; background: #eceef0; }
.pill i { width: 12px; height: 5px; border-radius: 2px; background: #8c929b; }
.ohlc { display: flex; gap: 7px; }
.ohlc b { font-weight: 400; color: #26a69a; }
.quote { height: 39px; padding-left: 6px; }
.quote span { width: 49px; text-align: center; }
.quote button { width: 60px; height: 29px; border: 1px solid; border-radius: 5px; background: #fff; }
.quote .sell { color: #dc4a44; }
.quote .buy { color: #2f8bd0; }
.ma { color: #b0b3ba; }
.ma svg { width: 22px; height: 22px; margin: 0 12px 0 15px; color: #131722; }
.fold { width: 36px; height: 26px; margin: 3px 0 0 7px; border: 1px solid #c9ccd2; border-radius: 3px; background: rgba(255, 255, 255, .9); color: #131722; }
.fold svg { width: 14px; height: 14px; stroke-width: 3; }
.vol { top: 510px; }
.vol b { font-weight: 400; margin-left: 11px; }
.vol b + b { margin-left: 8px; }
.g { color: #26a69a; }
.b { color: #2f8bd0; }
.y { color: #e59c20; }
.corner { position: absolute; right: 6px; top: 7px; display: flex; gap: 5px; }
.corner button { width: 27px; height: 27px; border: 1px solid #dfe2e6; border-radius: 4px; background: #fff; }
.corner svg { width: 22px; height: 22px; }
.addline { position: absolute; right: 1px; top: 261px; width: 19px; height: 19px; background: #4a505c; color: #fff; }
.addline svg { width: 14px; height: 14px; stroke-width: 2; }

.ranges { display: flex; align-items: center; gap: 17px; height: 48px; padding: 0 14px 0 20px; font-size: 17px; }
.ranges i { width: 1px; height: 28px; background: #dfe2e6; }
.ranges > i { margin: 0 4px; }
.ranges svg { width: 24px; height: 24px; }
.modes { display: flex; align-items: center; gap: 20px; margin-left: auto; }
.hot { color: #2f8bd0; }
.dock { flex: 1; display: flex; background: #fff; border-radius: 5px 5px 0 0; font-size: 17px; padding-right: 8px; }
.dock button { border-right: 1px solid #dfe2e6; gap: 6px; }
.dock .ctl { width: 46px; border: 0; }
.dock svg { width: 22px; height: 22px; }
.dock .ctl svg { width: 26px; height: 26px; }
.dock .d138 { width: 138px; padding-left: 14px; }
.d111 { width: 111px; }
.d127 { width: 128px; }

/* watchlist and details */
.side { position: relative; width: 334px; flex: none; margin-left: 6px; display: flex; flex-direction: column; gap: 5px; }
.handle { position: absolute; left: -4px; top: 836px; width: 10px; height: 33px; background: #fff; border: 1px solid #dfe2e6; border-radius: 4px; color: #888; }
.watch { height: 469px; flex: none; background: #fff; }
.whead { display: flex; align-items: center; justify-content: space-between; height: 61px; padding: 0 20px 0 18px; }
.whead button { font-size: 17px; font-weight: 700; gap: 1px; }
.whead svg { width: 22px; height: 22px; }
.whead input { width: 112px; height: 30px; padding: 0 10px; border: 1px solid #c9ccd2; border-radius: 4px; font: inherit; font-size: 17px; }
.whead input::placeholder { color: #a3a6af; opacity: 1; }
table { width: 100%; border-collapse: collapse; font-size: 17px; table-layout: fixed; }
th { position: relative; height: 34px; padding: 0; font-weight: 400; color: #787b86; text-align: right; border-bottom: 1px solid #dfe2e6; }
th:first-child, td:first-child { width: 166px; padding-left: 20px; text-align: left; }
th:last-child, td:last-child { width: 80px; padding-right: 10px; }
.grip { position: absolute; left: 7px; top: 8px; width: 4px; height: 18px; background: radial-gradient(circle, #787b86 50%, transparent 60%) 0 0 / 4px 6px; }
tbody::before { content: ""; display: block; height: 5px; }
td { height: 38px; padding: 0; text-align: right; }
td:last-child { color: #e0443e; }
tbody tr:last-child td { border-bottom: 1px solid #eceef0; }
td i { display: inline-block; width: 7px; height: 7px; margin-left: 3px; border-radius: 50%; background: #9598a1; vertical-align: 2px; }
.sel { outline: 2px solid #3d8fc5; outline-offset: -2px; }
.detail { flex: 1; min-height: 0; overflow: hidden; padding: 15px 20px 0; background: #fff; }
.dhead { display: flex; align-items: center; justify-content: space-between; height: 30px; }
h2 { font-size: 17px; }
.dhead button { width: 30px; height: 30px; border: 1px solid #b2b5be; border-radius: 5px; color: #9598a1; }
.firm { display: flex; align-items: center; height: 26px; }
.dhead + .firm { margin-top: 14px; }
.firm i { width: 4px; height: 4px; border-radius: 50%; background: #9598a1; margin: 0 7px; }
.soft, .state { color: #9598a1; }
.price { display: flex; align-items: baseline; height: 42px; margin-top: 15px; line-height: 44px; }
.price strong { font-size: 38px; }
.price small { font-size: 14px; margin: 0 10px 0 8px; color: #444; }
.price span { font-size: 19px; color: #e0443e; }
.state { display: flex; align-items: center; height: 20px; margin-bottom: 15px; }
.state i { width: 7px; height: 7px; border-radius: 50%; background: #9598a1; margin-right: 6px; }
.state span { margin-left: 10px; }
.span { height: 58px; }
.span > div:first-child { display: flex; justify-content: space-between; line-height: 20px; }
.span b { font-weight: 400; }
.span span { color: #9598a1; }
.track { position: relative; height: 7px; margin-top: 7px; border-radius: 4px; background: #edf0f4; }
.seg { position: absolute; top: 0; height: 7px; background: #ea4335; }
.tri { position: absolute; top: 11px; margin-left: -6px; border: 6px solid transparent; border-top: 0; border-bottom: 9px solid #484b52; }
h3 { font-size: 16px; line-height: 20px; margin: 20px 0 10px; }
dl div { display: flex; justify-content: space-between; height: 30px; align-items: center; }
dt { color: #787b86; }

.rail { position: relative; width: 57px; flex: none; background: #edf2f6; border-left: 1px solid #dfe2e6; overflow: hidden; display: flex; flex-direction: column; }
.rail .group { padding: 9px 0; border-bottom: 1px solid #dfe2e6; }
.rail .group:first-child { padding-top: 0; }
.rail .group:nth-child(n + 3) { border: 0; padding-bottom: 0; }
.rail .group:nth-child(4) { padding-top: 14px; }
.rail button { position: relative; width: 100%; height: 62px; padding-right: 1px; }
.rail svg { width: 28px; height: 28px; }
.rail .on { height: 64px; background: #fff; color: #3f92c8; }
.rail .badge { right: 4px; top: 8px; }
.thumb { position: absolute; right: 0; top: 844px; width: 9px; height: 58px; border-radius: 5px; background: #9a9c9f; }

/* system bar */
.taskbar { flex: none; display: flex; height: 50px; background: linear-gradient(90deg, #22363b, #263437 50%, #262b2b 62%, #192d31); color: #fff; font-family: "Open Sans", "Noto Sans CJK SC", sans-serif; }
.taskbar button { width: 62px; }
.taskbar .run { width: 51px; margin: 0 5px 0 6px; border-bottom: 3px solid #aab0b4; border-top: 3px solid transparent; }
.taskbar svg { width: 28px; height: 28px; }
.tray { display: flex; align-items: center; gap: 6px; font-size: 18px; }
.taskbar .tray svg, .tray span { width: 24px; height: 24px; text-align: center; line-height: 24px; }
.taskbar .tray .sogou { margin-left: 6px; }
.clock { display: flex; flex-direction: column; justify-content: center; width: 112px; text-align: center; font-size: 15px; line-height: 23px; }
.taskbar .notif { width: 57px; padding-right: 24px; }
</style>
